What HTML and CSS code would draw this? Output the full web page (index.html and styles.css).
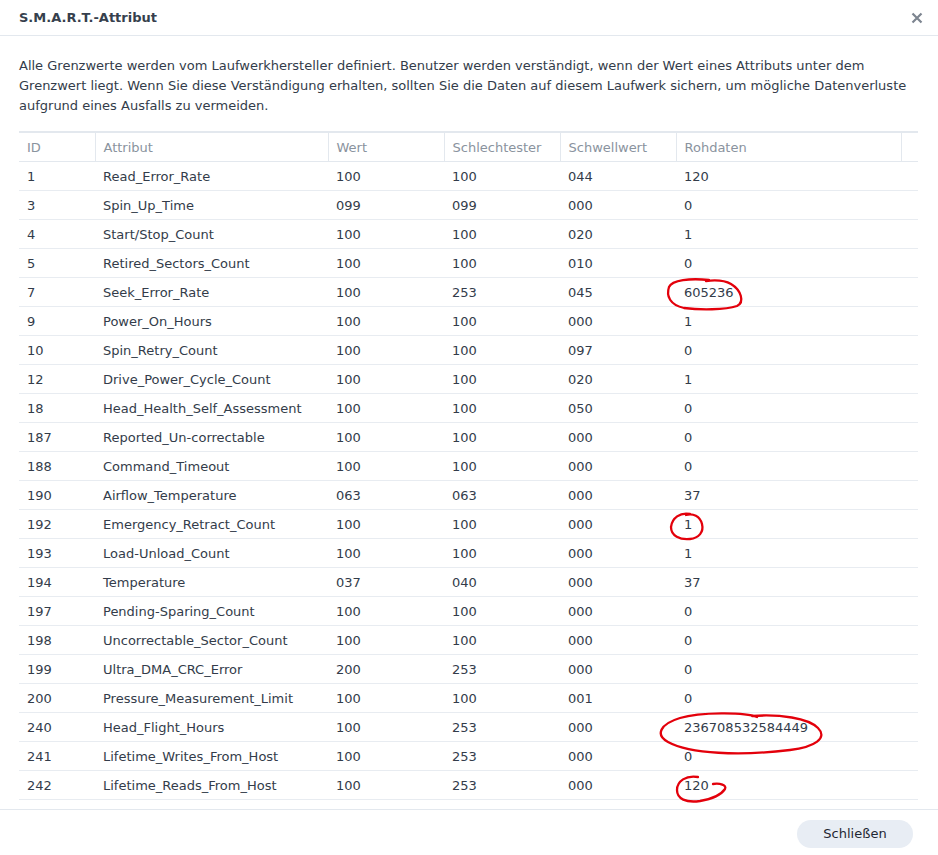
FILE: index.html
```html
<!DOCTYPE html>
<html lang="de">
<head>
  <meta charset="UTF-8">
  <meta name="viewport" content="width=device-width, initial-scale=1">
  <title>S.M.A.R.T.-Attribut</title>
  <link rel="stylesheet" href="styles.css">
</head>
<body>
<div class="dialog">
  <div class="dialog-header">
    <div class="dialog-title">S.M.A.R.T.-Attribut</div>
    <div class="dialog-close">
      <svg width="12" height="12" viewBox="0 0 12 12">
        <path d="M1.5 1.5 L10.5 10.5 M10.5 1.5 L1.5 10.5" stroke="#7d8590" stroke-width="2.2" fill="none"/>
      </svg>
    </div>
  </div>
  <div class="dialog-body">
    <p class="intro">Alle Grenzwerte werden vom Laufwerkhersteller definiert. Benutzer werden verständigt, wenn der Wert eines Attributs unter dem Grenzwert liegt. Wenn Sie diese Verständigung erhalten, sollten Sie die Daten auf diesem Laufwerk sichern, um mögliche Datenverluste aufgrund eines Ausfalls zu vermeiden.</p>
    <table class="smart-table">
      <colgroup>
        <col class="col-id">
        <col class="col-attr">
        <col class="col-num">
        <col class="col-num">
        <col class="col-num">
        <col class="col-raw">
        <col class="col-gutter">
      </colgroup>
      <thead>
        <tr>
          <th>ID</th>
          <th>Attribut</th>
          <th>Wert</th>
          <th>Schlechtester</th>
          <th>Schwellwert</th>
          <th>Rohdaten</th>
          <th></th>
        </tr>
      </thead>
      <tbody>
        <tr><td>1</td><td>Read_Error_Rate</td><td>100</td><td>100</td><td>044</td><td>120</td><td></td></tr>
        <tr><td>3</td><td>Spin_Up_Time</td><td>099</td><td>099</td><td>000</td><td>0</td><td></td></tr>
        <tr><td>4</td><td>Start/Stop_Count</td><td>100</td><td>100</td><td>020</td><td>1</td><td></td></tr>
        <tr><td>5</td><td>Retired_Sectors_Count</td><td>100</td><td>100</td><td>010</td><td>0</td><td></td></tr>
        <tr><td>7</td><td>Seek_Error_Rate</td><td>100</td><td>253</td><td>045</td><td>605236</td><td></td></tr>
        <tr><td>9</td><td>Power_On_Hours</td><td>100</td><td>100</td><td>000</td><td>1</td><td></td></tr>
        <tr><td>10</td><td>Spin_Retry_Count</td><td>100</td><td>100</td><td>097</td><td>0</td><td></td></tr>
        <tr><td>12</td><td>Drive_Power_Cycle_Count</td><td>100</td><td>100</td><td>020</td><td>1</td><td></td></tr>
        <tr><td>18</td><td>Head_Health_Self_Assessment</td><td>100</td><td>100</td><td>050</td><td>0</td><td></td></tr>
        <tr><td>187</td><td>Reported_Un-correctable</td><td>100</td><td>100</td><td>000</td><td>0</td><td></td></tr>
        <tr><td>188</td><td>Command_Timeout</td><td>100</td><td>100</td><td>000</td><td>0</td><td></td></tr>
        <tr><td>190</td><td>Airflow_Temperature</td><td>063</td><td>063</td><td>000</td><td>37</td><td></td></tr>
        <tr><td>192</td><td>Emergency_Retract_Count</td><td>100</td><td>100</td><td>000</td><td>1</td><td></td></tr>
        <tr><td>193</td><td>Load-Unload_Count</td><td>100</td><td>100</td><td>000</td><td>1</td><td></td></tr>
        <tr><td>194</td><td>Temperature</td><td>037</td><td>040</td><td>000</td><td>37</td><td></td></tr>
        <tr><td>197</td><td>Pending-Sparing_Count</td><td>100</td><td>100</td><td>000</td><td>0</td><td></td></tr>
        <tr><td>198</td><td>Uncorrectable_Sector_Count</td><td>100</td><td>100</td><td>000</td><td>0</td><td></td></tr>
        <tr><td>199</td><td>Ultra_DMA_CRC_Error</td><td>200</td><td>253</td><td>000</td><td>0</td><td></td></tr>
        <tr><td>200</td><td>Pressure_Measurement_Limit</td><td>100</td><td>100</td><td>001</td><td>0</td><td></td></tr>
        <tr><td>240</td><td>Head_Flight_Hours</td><td>100</td><td>253</td><td>000</td><td>236708532584449</td><td></td></tr>
        <tr><td>241</td><td>Lifetime_Writes_From_Host</td><td>100</td><td>253</td><td>000</td><td>0</td><td></td></tr>
        <tr><td>242</td><td>Lifetime_Reads_From_Host</td><td>100</td><td>253</td><td>000</td><td>120</td><td></td></tr>
      </tbody>
    </table>
  </div>
  <div class="dialog-footer">
    <button class="btn">Schließen</button>
  </div>
</div>
<!-- hand-drawn red marks over the screenshot -->
<svg class="marks" width="938" height="855" viewBox="0 0 938 855">
  <g stroke="#e3000b" stroke-width="2.3" fill="none" stroke-linecap="round">
    <path d="M709 280 C690 278 672 280 669 287 C666 296 670 305 684 308 C700 310 725 310 737 306 C745 302 741 290 731 284 C724 280 714 280 706 281"/>
    <path d="M690 514 C680 512 672 518 671 527 C671 536 680 540 690 539 C699 538 704 532 702 524 C700 516 693 513 686 515"/>
    <path d="M757 717 C745 712 700 712 680 718 C660 724 655 735 668 742 C690 754 740 756 790 750 C815 747 828 738 818 728 C808 718 780 714 752 716"/>
    <path d="M698 777 C686 775 677 781 677 790 C677 799 686 803 700 801 C712 799 721 795 725 789 C727 785 720 783 713 784"/>
  </g>
</svg>
</body>
</html>
```

FILE: styles.css
```css
html, body {
  margin: 0;
  padding: 0;
  background: #ffffff;
}

body {
  font-family: "DejaVu Sans", Verdana, sans-serif;
  font-size: 13px;
  color: #333c4a;
}

.dialog {
  width: 938px;
  height: 855px;
  display: flex;
  flex-direction: column;
}

.dialog-header {
  height: 35px;
  display: flex;
  align-items: center;
  justify-content: space-between;
  padding: 0 19px;
  border-bottom: 1px solid #e3e8ee;
}

.dialog-title {
  font-weight: bold;
  font-size: 13px;
  color: #363f4d;
}

.dialog-close {
  display: flex;
  margin-right: -4px;
}

.dialog-body {
  flex: 1;
  padding: 0 20px 9px 19px;
  border-bottom: 1px solid #e3e8ee;
}

.intro {
  margin: 20px 0 15px;
  line-height: 20px;
}

.smart-table {
  width: 899px;
  border-collapse: collapse;
  table-layout: fixed;
}

.col-id { width: 76px; }
.col-attr { width: 233px; }
.col-num { width: 116px; }
.col-raw { width: 225px; }
.col-gutter { width: 17px; }

.smart-table th {
  text-align: left;
  font-weight: normal;
  color: #8a939e;
  height: 28px;
  padding: 0 0 0 8px;
  border-top: 2px solid #e3e8ee;
  border-bottom: 1px solid #e3e8ee;
  border-left: 1px solid #e3e8ee;
}

.smart-table th:first-child {
  border-left: none;
}

.smart-table td {
  height: 28px;
  padding: 0 0 0 8px;
  border-bottom: 1px solid #e8ecf1;
  white-space: nowrap;
}

.dialog-footer {
  height: 45px;
  display: flex;
  align-items: center;
  justify-content: flex-end;
  padding: 0 25px 0 0;
}

.btn {
  width: 116px;
  height: 28px;
  border: none;
  border-radius: 14px;
  background: #e8edf4;
  font-family: "DejaVu Sans", Verdana, sans-serif;
  font-size: 13px;
  color: #1f2733;
  margin-top: 2px;
}

.marks {
  position: absolute;
  left: 0;
  top: 0;
  pointer-events: none;
}
```
